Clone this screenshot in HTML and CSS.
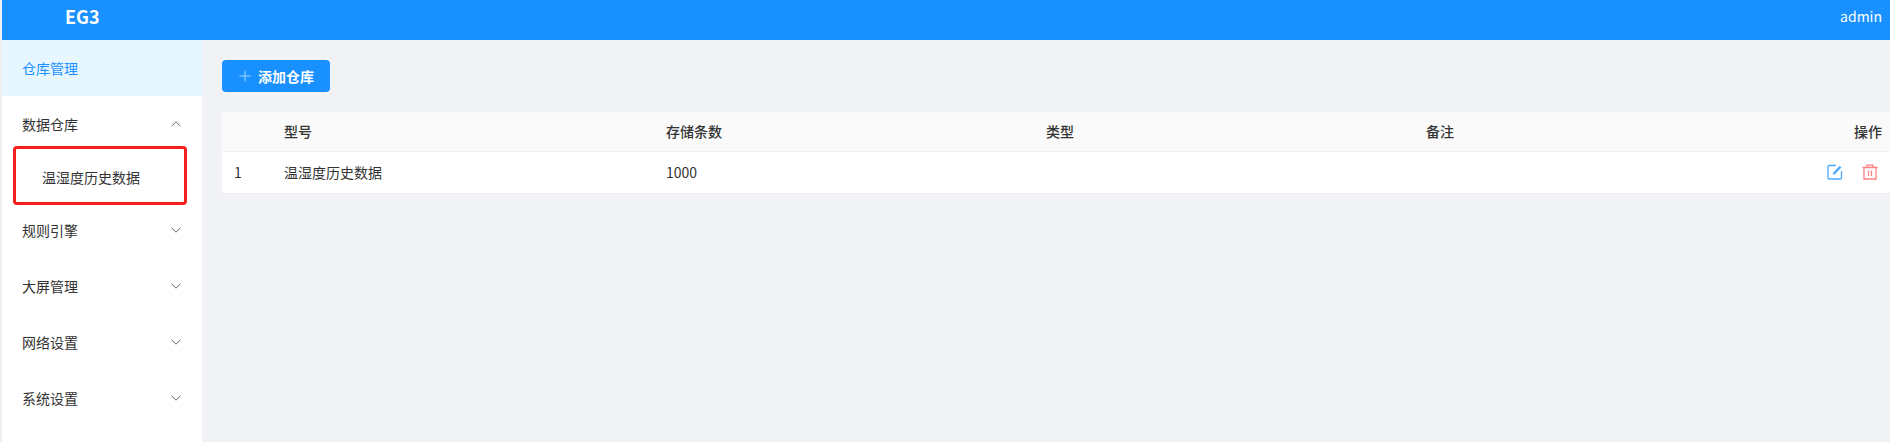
FILE: index.html
```html
<!DOCTYPE html>
<html lang="zh-CN">
<head>
<meta charset="utf-8">
<title>EG3</title>
<link rel="stylesheet" href="styles.css">
</head>
<body>
<div class="app">
  <header class="topbar">
    <div class="logo">EG3</div>
    <div class="user">admin</div>
  </header>
  <div class="body">
    <nav class="side">
      <div class="menu-item active">仓库管理</div>
      <div class="menu-item"><span>数据仓库</span><svg class="chev" viewBox="0 0 10 6"><path d="M.5 5.300 5 .8l4.500 4.500"/></svg></div>
      <div class="sub-item">温湿度历史数据</div>
      <div class="menu-item"><span>规则引擎</span><svg class="chev" viewBox="0 0 10 6"><path d="M.5.7 5 5.200 9.500.7"/></svg></div>
      <div class="menu-item"><span>大屏管理</span><svg class="chev" viewBox="0 0 10 6"><path d="M.5.7 5 5.200 9.500.7"/></svg></div>
      <div class="menu-item"><span>网络设置</span><svg class="chev" viewBox="0 0 10 6"><path d="M.5.7 5 5.200 9.500.7"/></svg></div>
      <div class="menu-item"><span>系统设置</span><svg class="chev" viewBox="0 0 10 6"><path d="M.5.7 5 5.200 9.500.7"/></svg></div>
      <div class="highlight"></div>
    </nav>
    <main class="content">
      <button class="add-btn"><svg class="plus" viewBox="0 0 12 12"><path d="M6 .5v11M.5 6h11"/></svg><span>添加仓库</span></button>
      <table class="grid">
        <colgroup><col class="c-idx"><col class="c-wide"><col class="c-data"><col class="c-data"><col class="c-data"><col></colgroup>
        <thead>
          <tr><th></th><th>型号</th><th>存储条数</th><th>类型</th><th>备注</th><th class="right">操作</th></tr>
        </thead>
        <tbody>
          <tr>
            <td>1</td><td>温湿度历史数据</td><td>1000</td><td></td><td></td>
            <td class="right actions">
              <svg class="icon" viewBox="0 0 16 16"><path class="edit" d="M9 1.500H2a1 1 0 0 0-1 1V14a1 1 0 0 0 1 1h11.500a1 1 0 0 0 1-1V7"/><path class="pencil" d="M6 10.500 6.500 8.500l6.200-6.400 1.400 1.400-6.200 6.500z"/></svg>
              <svg class="icon" viewBox="0 0 16 16"><path class="del" d="M.5 3.500h15M5 3.500V1.200h6v2.300M2 3.500V15h12V3.500M6.500 6.500v5.500M9.500 6.500v5.500"/></svg>
            </td>
          </tr>
        </tbody>
      </table>
    </main>
  </div>
</div>
</body>
</html>
```
FILE: styles.css
```css
* { box-sizing: border-box; }
html, body { margin: 0; height: 100%; }
body {
  font-family: "Noto Sans CJK SC", "Noto Sans", sans-serif;
  font-size: 14px;
  color: #333;
  background: #f0f2f5;
  overflow: hidden;
}
.app { height: 442px; display: flex; flex-direction: column; border-left: 2px solid #f0f0f0; }
.topbar {
  height: 40px; flex: none;
  background: #1890ff; color: #fff;
  display: flex; align-items: center; justify-content: space-between;
  padding: 0 8px 8px 63px;
}
.logo { font-size: 18px; font-weight: 700; }
.user { font-size: 14px; }
.body { flex: 1; display: flex; min-height: 0; }
.side { width: 200px; flex: none; background: #fff; position: relative; }
.menu-item {
  height: 56px; padding: 0 20px;
  display: flex; align-items: center; justify-content: space-between;
}
.menu-item.active { background: #e6f7ff; color: #1890ff; }
.sub-item { height: 50px; padding-left: 40px; display: flex; align-items: center; }
.chev { width: 10px; height: 6px; margin-right: 1px; fill: none; stroke: #555; stroke-width: .9; }
.highlight {
  position: absolute; left: 11px; top: 106px; width: 174px; height: 59px;
  border: 3px solid #f5201c; border-radius: 4px;
}
.content { flex: 1; min-width: 0; padding: 20px 0 0 20px; }
.add-btn {
  width: 108px; height: 32px; padding: 0 0 0 17px;
  display: flex; align-items: center; gap: 7px;
  background: #1890ff; color: #fff; border: 0; border-radius: 4px;
  font: 700 14px "Noto Sans CJK SC", sans-serif;
}
.plus { width: 12px; height: 12px; fill: none; stroke: #a8d6ff; stroke-width: 1; }
.grid { width: 100%; margin-top: 20px; border-collapse: separate; border-spacing: 0; table-layout: fixed; background: #fff; }
.c-idx { width: 50px; }
.c-wide { width: 382px; }
.c-data { width: 380px; }
.grid th, .grid td { padding: 0 12px 2px; text-align: left; border-bottom: 1px solid #f0f0f0; }
.grid th { height: 40px; background: #fafafa; font-weight: 500; }
.grid td { height: 42px; padding-bottom: 1px; }
.grid .right { text-align: right; padding-right: 8px; }
.grid .actions { font-size: 0; padding-right: 12px; padding-bottom: 1px; }
.icon { width: 16px; height: 16px; vertical-align: middle; fill: none; stroke-width: 1.300; }
.icon + .icon { margin-left: 19px; }
.edit { stroke: #4ea9ff; }
.pencil { fill: #4ea9ff; stroke: #4ea9ff; stroke-width: .5; }
.del { stroke: #ff8080; }
```
